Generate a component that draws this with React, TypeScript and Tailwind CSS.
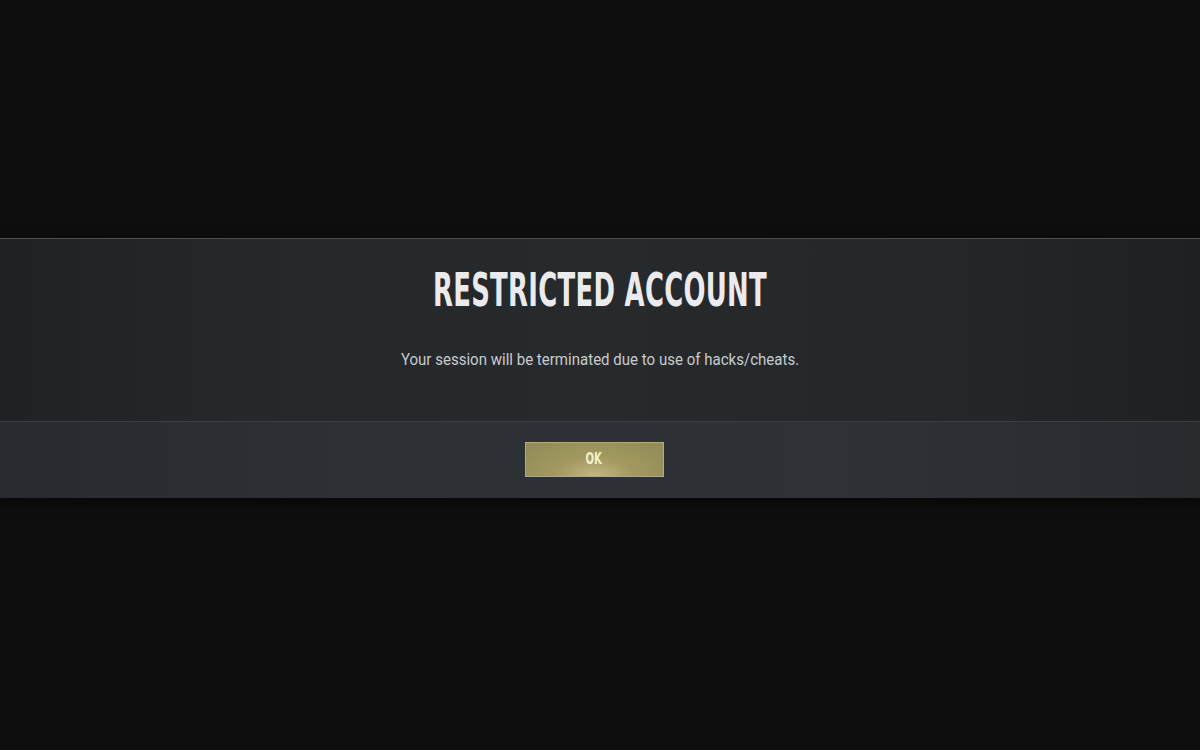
export default function App() {
  return (
    <div className="flex h-[750px] w-[1200px] flex-col bg-[#0e0e0e]">
      <div className="h-[238px]" />
      <div className="flex flex-col border-t border-[#4d4f50] shadow-[0_4px_12px_rgba(0,0,0,0.6)]">
        <div className="flex h-[182px] flex-col items-center bg-[linear-gradient(90deg,#1f2224_0%,#25282b_20%,#272a2d_50%,#24272a_80%,#1e2022_100%)]">
          <h1 className="mt-[25px] origin-center scale-x-[0.612] font-['DejaVu_Sans_Condensed','DejaVu_Sans',sans-serif] text-[47px] leading-[52px] font-bold tracking-[0.5px] whitespace-nowrap text-[#ebebee] [font-stretch:condensed]">
            RESTRICTED ACCOUNT
          </h1>
          <p className="mt-[33px] origin-center scale-x-[0.885] font-['Roboto',sans-serif] text-[17px] leading-[20px] whitespace-nowrap text-[#c8cacc]">
            Your session will be terminated due to use of hacks/cheats.
          </p>
        </div>
        <div className="flex h-[77px] items-center justify-center border-t border-[#3a3e42] bg-[linear-gradient(90deg,#272a2e_0%,#2d3135_30%,#2e3236_70%,#282b2e_100%)] pr-[12px] pb-[2px]">
          <button className="flex h-[35px] w-[139px] items-center justify-center border border-[#b4ab76] bg-[radial-gradient(ellipse_at_50%_100%,#c2b884_0%,#a1995f_40%,#928a57_100%)]">
            <span className="scale-x-[0.7] font-['DejaVu_Sans_Condensed','DejaVu_Sans',sans-serif] text-[16px] font-bold text-[#f4efc6] [font-stretch:condensed]">
              OK
            </span>
          </button>
        </div>
      </div>
    </div>
  );
}
